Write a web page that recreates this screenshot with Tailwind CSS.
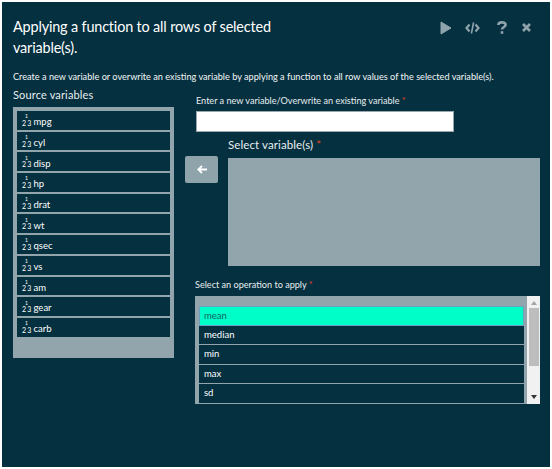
<!DOCTYPE html>
<html>
<head>
<meta charset="utf-8">
<script src="https://cdn.jsdelivr.net/npm/@tailwindcss/browser@4"></script>
</head>
<body class="bg-white">
<div class="w-[552px] h-[469px] border-2 border-white bg-[#05303f] text-white font-['Lato','Noto_Sans',sans-serif] overflow-hidden">
  <div class="flex justify-between pl-[11px] pr-[19px] pt-[14px]">
    <h1 class="w-[270px] text-[14.4px] leading-[21px] tracking-[-0.15px]">Applying a function to all rows of selected variable(s).</h1>
    <div class="flex items-center h-[23px] text-[#8fa3ad]">
      <svg class="w-[12px] h-[14px] mr-[13px]" viewBox="0 0 12 14"><path d="M1 1 L11 7 L1 13 Z" fill="currentColor" stroke="currentColor" stroke-linejoin="round"/></svg>
      <svg class="w-[15px] h-[12px] mr-[17px]" viewBox="0 0 15 12" fill="none" stroke="currentColor" stroke-width="2.2"><path d="M4.5 2.5 L1.5 6 L4.5 9.5 M10.5 2.5 L13.5 6 L10.5 9.5"/><path d="M8.6 0.5 L6.4 11.5" stroke-width="1.6"/></svg>
      <svg class="w-[10px] h-[13px] mr-[15px]" viewBox="0 0 10 13" fill="none" stroke="currentColor" stroke-width="2.6"><path d="M1.4 4 C1.4 0.5 8.6 0.5 8.6 3.8 C8.6 6 5 6 5 8.6"/><path d="M5 10.2 V12.8"/></svg>
      <svg class="w-[9px] h-[9px]" viewBox="0 0 9 9" fill="none" stroke="currentColor" stroke-width="2.6"><path d="M1 1 L8 8 M8 1 L1 8"/></svg>
    </div>
  </div>
  <p class="pl-[11px] mt-[12px] text-[9.17px] leading-[13px] text-[#f2f5f6] whitespace-nowrap">Create a new variable or overwrite an existing variable by applying a function to all row values of the selected variable(s).</p>
  <div class="flex pl-[11px] mt-[5px]">
    <div class="w-[161px] shrink-0">
      <div class="text-[11px] leading-[14px] tracking-[0.15px] text-[#e8eef0]">Source variables</div>
      <ul class="mt-[5px] h-[251px] bg-[#92a4ac] p-[4px] flex flex-col text-[9.5px]">
        <li class="h-[20.7px] shrink-0 border-b-2 border-[#92a4ac] bg-[#05303f] flex items-center pl-[5px] pt-[4px]"><span class="relative w-[9px] text-[7px] tracking-[1.2px] leading-none mt-[2px]">23<span class="absolute left-[3px] top-[-5.5px] text-[5px] leading-[5px]">1</span></span><span class="ml-[2.5px]">mpg</span></li>
        <li class="h-[20.7px] shrink-0 border-b-2 border-[#92a4ac] bg-[#05303f] flex items-center pl-[5px] pt-[4px]"><span class="relative w-[9px] text-[7px] tracking-[1.2px] leading-none mt-[2px]">23<span class="absolute left-[3px] top-[-5.5px] text-[5px] leading-[5px]">1</span></span><span class="ml-[2.5px]">cyl</span></li>
        <li class="h-[20.7px] shrink-0 border-b-2 border-[#92a4ac] bg-[#05303f] flex items-center pl-[5px] pt-[4px]"><span class="relative w-[9px] text-[7px] tracking-[1.2px] leading-none mt-[2px]">23<span class="absolute left-[3px] top-[-5.5px] text-[5px] leading-[5px]">1</span></span><span class="ml-[2.5px]">disp</span></li>
        <li class="h-[20.7px] shrink-0 border-b-2 border-[#92a4ac] bg-[#05303f] flex items-center pl-[5px] pt-[4px]"><span class="relative w-[9px] text-[7px] tracking-[1.2px] leading-none mt-[2px]">23<span class="absolute left-[3px] top-[-5.5px] text-[5px] leading-[5px]">1</span></span><span class="ml-[2.5px]">hp</span></li>
        <li class="h-[20.7px] shrink-0 border-b-2 border-[#92a4ac] bg-[#05303f] flex items-center pl-[5px] pt-[4px]"><span class="relative w-[9px] text-[7px] tracking-[1.2px] leading-none mt-[2px]">23<span class="absolute left-[3px] top-[-5.5px] text-[5px] leading-[5px]">1</span></span><span class="ml-[2.5px]">drat</span></li>
        <li class="h-[20.7px] shrink-0 border-b-2 border-[#92a4ac] bg-[#05303f] flex items-center pl-[5px] pt-[4px]"><span class="relative w-[9px] text-[7px] tracking-[1.2px] leading-none mt-[2px]">23<span class="absolute left-[3px] top-[-5.5px] text-[5px] leading-[5px]">1</span></span><span class="ml-[2.5px]">wt</span></li>
        <li class="h-[20.7px] shrink-0 border-b-2 border-[#92a4ac] bg-[#05303f] flex items-center pl-[5px] pt-[4px]"><span class="relative w-[9px] text-[7px] tracking-[1.2px] leading-none mt-[2px]">23<span class="absolute left-[3px] top-[-5.5px] text-[5px] leading-[5px]">1</span></span><span class="ml-[2.5px]">qsec</span></li>
        <li class="h-[20.7px] shrink-0 border-b-2 border-[#92a4ac] bg-[#05303f] flex items-center pl-[5px] pt-[4px]"><span class="relative w-[9px] text-[7px] tracking-[1.2px] leading-none mt-[2px]">23<span class="absolute left-[3px] top-[-5.5px] text-[5px] leading-[5px]">1</span></span><span class="ml-[2.5px]">vs</span></li>
        <li class="h-[20.7px] shrink-0 border-b-2 border-[#92a4ac] bg-[#05303f] flex items-center pl-[5px] pt-[4px]"><span class="relative w-[9px] text-[7px] tracking-[1.2px] leading-none mt-[2px]">23<span class="absolute left-[3px] top-[-5.5px] text-[5px] leading-[5px]">1</span></span><span class="ml-[2.5px]">am</span></li>
        <li class="h-[20.7px] shrink-0 border-b-2 border-[#92a4ac] bg-[#05303f] flex items-center pl-[5px] pt-[4px]"><span class="relative w-[9px] text-[7px] tracking-[1.2px] leading-none mt-[2px]">23<span class="absolute left-[3px] top-[-5.5px] text-[5px] leading-[5px]">1</span></span><span class="ml-[2.5px]">gear</span></li>
        <li class="h-[20.7px] shrink-0 border-b-2 border-[#92a4ac] bg-[#05303f] flex items-center pl-[5px] pt-[4px]"><span class="relative w-[9px] text-[7px] tracking-[1.2px] leading-none mt-[2px]">23<span class="absolute left-[3px] top-[-5.5px] text-[5px] leading-[5px]">1</span></span><span class="ml-[2.5px]">carb</span></li>
      </ul>
    </div>
    <div class="ml-[11px] w-[355px] shrink-0 pt-[6px]">
      <div class="pl-[11px] text-[9.1px] leading-[13px] text-[#e8eef0]">Enter a new variable/Overwrite an existing variable <span class="text-[#e0452a]">*</span></div>
      <div class="ml-[11px] mt-[4px] w-[258px] h-[21px] bg-white border border-[#9aa8ae]"></div>
      <div class="flex mt-[6px]">
        <div class="w-[43px] shrink-0 pt-[18px]">
          <div class="w-[33px] h-[27px] bg-[#8fa3ab] rounded-[2px] flex items-center justify-center">
            <svg class="w-[10px] h-[9px]" viewBox="0 0 10 9" fill="none" stroke="white" stroke-width="1.8"><path d="M5 0.8 L1.2 4.5 L5 8.2 M1.5 4.5 H10"/></svg>
          </div>
        </div>
        <div class="w-[312px]">
          <div class="text-[11.5px] leading-[14px] tracking-[0.1px] text-[#e8eef0]">Select variable(s) <span class="text-[#e0452a]">*</span></div>
          <div class="mt-[6px] h-[108px] bg-[#92a4ac]"></div>
        </div>
      </div>
      <div class="pl-[10px] mt-[12px] text-[9.1px] leading-[13px] text-[#e8eef0]">Select an operation to apply <span class="text-[#e0452a]">*</span></div>
      <div class="ml-[10px] mt-[5px] w-[345px] h-[108px] flex">
        <ul class="flex-1 bg-[#92a4ac] pt-[10px] pl-[4px] pr-[3px] flex flex-col overflow-hidden text-[9.5px]">
          <li class="h-[19.5px] shrink-0 bg-[#00ffc8] border border-[#6f9fc0] flex items-center pl-[4px] text-[#0f5f60]">mean</li>
          <li class="h-[19.5px] shrink-0 bg-[#05303f] border-b border-[#92a4ac] flex items-center pl-[5px]">median</li>
          <li class="h-[19.5px] shrink-0 bg-[#05303f] border-b border-[#92a4ac] flex items-center pl-[5px]">min</li>
          <li class="h-[19.5px] shrink-0 bg-[#05303f] border-b border-[#92a4ac] flex items-center pl-[5px]">max</li>
          <li class="h-[19.5px] shrink-0 bg-[#05303f] border-b border-[#92a4ac] flex items-center pl-[5px]">sd</li>
        </ul>
        <div class="w-[13px] bg-[#f1f1f1] flex flex-col items-center">
          <svg class="w-[6px] h-[4px] mt-[5px]" viewBox="0 0 6 4"><path d="M3 0 L6 4 H0 Z" fill="#a3a3a3"/></svg>
          <div class="w-[10px] h-[58px] mt-[3px] bg-[#bdbdbd]"></div>
          <svg class="w-[6px] h-[4px] mt-auto mb-[5px]" viewBox="0 0 6 4"><path d="M0 0 H6 L3 4 Z" fill="#333"/></svg>
        </div>
      </div>
    </div>
  </div>
</div>
</body>
</html>
